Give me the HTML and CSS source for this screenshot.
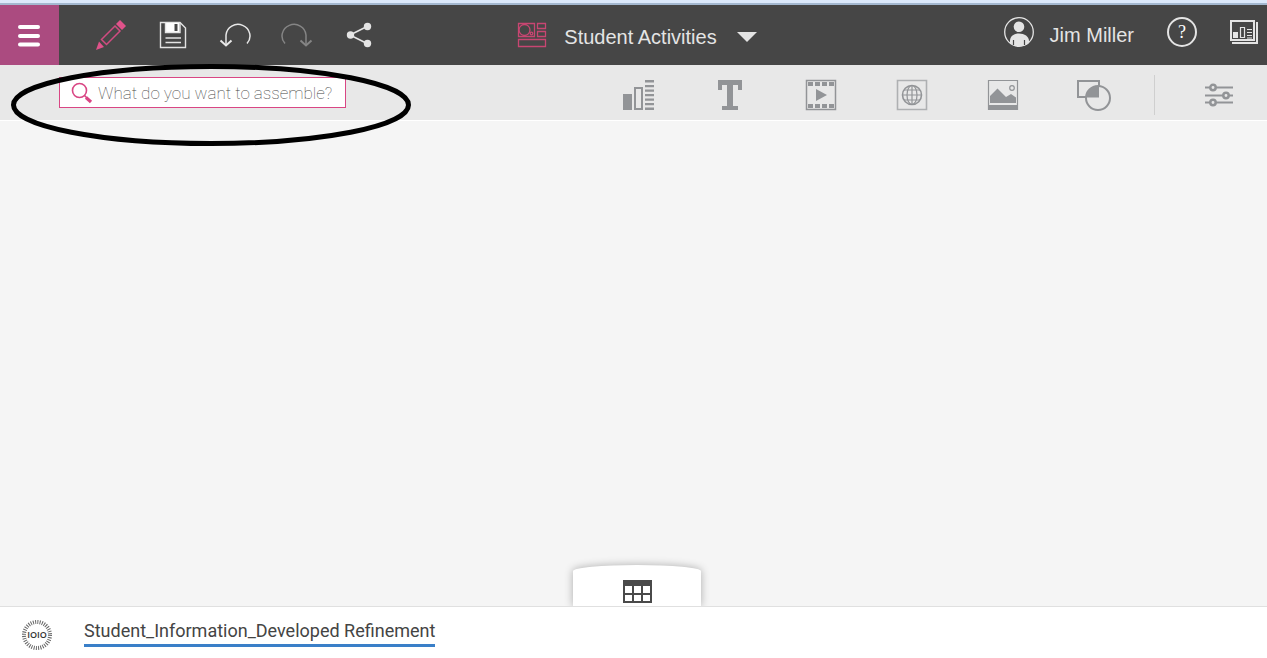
FILE: index.html
```html
<!DOCTYPE html>
<html lang="en">
<head>
<meta charset="utf-8">
<title>Student Activities</title>
<link rel="stylesheet" href="styles.css">
</head>
<body>
<div class="strip"></div>
<header class="appbar">
  <div class="actions">
    <button class="menu" aria-label="Menu">
      <svg width="24" height="24" viewBox="0 0 24 24" stroke="#fff" stroke-width="4" stroke-linecap="round"><path d="M3 4H21M3 13H21M3 21.500H21"/></svg>
    </button>
    <button class="action" aria-label="Edit">
      <svg width="32" height="32" viewBox="0 0 32 32"><path d="M25 1L31 7L27 11L21 5Z" fill="#e0528a"/><path d="M1 31L4 22.500L9 28Z" fill="#e0528a"/><path d="M20 7L25 12L11.500 25.500L6.500 20.500Z" fill="none" stroke="#d04c80" stroke-width="1.500"/></svg>
    </button>
    <button class="action" aria-label="Save">
      <svg width="28" height="28" viewBox="0 0 28 28" fill="none" stroke="#e4e4e4" stroke-width="1.400"><path d="M1.500 1.500H21L26.500 7V26.500H1.500Z"/><path d="M6.500 2V11H20.500V2Z" fill="#fff" stroke="none"/><path d="M15.500 3H18.500V10H15.500Z" fill="#464646" stroke="none"/><path d="M21 2V11.500H6.500V2M6.500 17H22M6.500 21.500H22"/></svg>
    </button>
    <button class="action" aria-label="Undo">
      <svg width="32" height="26" viewBox="0 0 32 26" fill="none" stroke="#e8e8e8" stroke-width="1.500"><path d="M7 24V13A12 11.500 0 1 1 28 21.500"/><path d="M1.500 18.500L7 23.500L12.500 18.500" stroke-width="2"/></svg>
    </button>
    <button class="action" aria-label="Redo" disabled>
      <svg width="32" height="26" viewBox="0 0 32 26" fill="none" stroke="#858585" stroke-width="1.500"><path d="M25 24V13A12 11.500 0 1 0 4 21.500"/><path d="M19.500 18.500L25 23.500L30.500 18.500" stroke-width="2"/></svg>
    </button>
    <button class="action" aria-label="Share">
      <svg width="26" height="26" viewBox="0 0 26 26" fill="#e4e4e4"><path d="M21 4.500L4 13L21 21.500" fill="none" stroke="#e4e4e4" stroke-width="1.600"/><circle cx="21.500" cy="4.500" r="3.700"/><circle cx="4.500" cy="13" r="3.700"/><circle cx="21.500" cy="21.500" r="3.700"/></svg>
    </button>
  </div>
  <button class="board">
    <svg width="30" height="26" viewBox="0 0 30 26" fill="none" stroke="#c84672" stroke-width="1.300"><path d="M1.500 1.500H17.500V14.500H1.500ZM20.500 1.500H28.500V6.500H20.500ZM20.500 9.500H28.500V14.500H20.500ZM1.500 17.500H28.500V24.500H1.500Z"/><circle cx="7.500" cy="8" r="5.500"/><circle cx="14.500" cy="11.500" r="1.300"/></svg>
    <span>Student Activities</span>
    <svg width="20" height="10" viewBox="0 0 20 10"><path d="M0 0H20L10 10Z" fill="#e4e4e4"/></svg>
  </button>
  <div class="account">
    <button class="user">
      <svg width="30" height="30" viewBox="0 0 30 30"><circle cx="15" cy="15" r="14.300" fill="none" stroke="#e4e4e4" stroke-width="1.300"/><circle cx="15" cy="9.800" r="5.300" fill="#e4e4e4"/><path d="M6 26V24C6 19.500 9.500 16.500 15 16.500S25 19.500 25 24V26C19 30.500 11 30.500 6 26Z" fill="#e4e4e4"/><path d="M9.500 23V28M20.500 23V28" stroke="#464646" stroke-width="1.200"/></svg>
      <span>Jim Miller</span>
    </button>
    <button class="help" aria-label="Help">?</button>
    <button class="gallery" aria-label="My boards">
      <svg width="28" height="24" viewBox="0 0 28 24" fill="none" stroke="#e4e4e4"><path d="M1 1H24V20H1Z" stroke-width="2"/><path d="M27 2V23H2" stroke-width="2"/><path d="M3 12H8V18H3Z" fill="#e4e4e4" stroke="none"/><path d="M10.500 7.500H14.500V17.500H10.500Z" stroke-width="1.200"/><path d="M17 9.500H22M17 12.500H22M17 15.500H22M17 18H22" stroke-width="1.200"/></svg>
    </button>
  </div>
</header>
<div class="toolbar">
  <form class="search">
    <label for="q"><svg width="22" height="22" viewBox="0 0 22 22" fill="none" stroke="#d94684"><circle cx="8.500" cy="8.500" r="7" stroke-width="1.600"/><path d="M13.500 13.500L16 16" stroke-width="1.600"/><path d="M15 15.500L20 20" stroke-width="3.200"/></svg></label>
    <input id="q" type="text" aria-label="Search" placeholder="What do you want to assemble?">
  </form>
  <div class="tools">
    <button class="tool" aria-label="Visualization">
      <svg width="32" height="32" viewBox="0 0 32 32" fill="#929497"><path d="M0 15H9V31H0ZM22 1H31V3.500H22ZM22 6H31V8.200H22ZM22 10.500H31V12.700H22ZM22 15H31V17.200H22ZM22 19.500H31V21.700H22ZM22 24H31V26.200H22ZM22 28.500H31V31H22Z"/><path d="M12 9H19V30H12Z" fill="none" stroke="#929497" stroke-width="2"/></svg>
    </button>
    <button class="tool" aria-label="Text">
      <svg width="26" height="32" viewBox="0 0 26 32"><path d="M1 1H25V11H21V6H16V27H21V31H5V27H10V6H5V11H1Z" fill="#929497"/></svg>
    </button>
    <button class="tool" aria-label="Media">
      <svg width="32" height="32" viewBox="0 0 32 32" fill="#929497"><path d="M1.500 1.500H30.500V30.500H1.500Z" fill="none" stroke="#929497" stroke-width="1.500"/><path d="M11 10L22 16L11 22Z"/><path d="M3 5H29M3 27H29" stroke="#929497" stroke-width="4" stroke-dasharray="5 2"/></svg>
    </button>
    <button class="tool" aria-label="Web page">
      <svg width="32" height="32" viewBox="0 0 32 32" fill="none" stroke="#929497" stroke-width="1.200"><path d="M1.500 1.500H30.500V30.500H1.500Z" stroke="#aeb0b2" stroke-width="1.600"/><circle cx="16" cy="16" r="9.500" stroke-width="1.600"/><ellipse cx="16" cy="16" rx="5" ry="9.500"/><path d="M16 6.500V25.500M6.500 16H25.500M8 11H24M8 21H24"/></svg>
    </button>
    <button class="tool" aria-label="Image">
      <svg width="32" height="32" viewBox="0 0 32 32" fill="#929497"><path d="M1.500 1.500H30.500V30.500H1.500Z" fill="none" stroke="#929497" stroke-width="1.200"/><path d="M3 24V17L10.500 9.500L19 18L24 15L29 18.500V24ZM1 26H31V31H1Z"/><circle cx="25" cy="9" r="2.300" fill="none" stroke="#929497" stroke-width="1.200"/></svg>
    </button>
    <button class="tool" aria-label="Shape">
      <svg width="36" height="32" viewBox="0 0 36 32" fill="none" stroke="#929497" stroke-width="2"><path d="M10 18H2V2H23V8"/><circle cx="22" cy="19" r="12"/><path d="M10 18.500A12 12 0 0 1 23 7V18.500Z" fill="#929497" stroke="none"/></svg>
    </button>
    <span class="divider"></span>
    <button class="tool settings" aria-label="Properties">
      <svg width="30" height="26" viewBox="0 0 30 26" fill="#e8e8e8" stroke="#929497" stroke-width="1.800"><path d="M1 5.500H29M1 13.500H29M1 20.500H29"/><circle cx="9" cy="5.500" r="2.700" stroke-width="2.500"/><circle cx="22" cy="13.500" r="2.700" stroke-width="2.500"/><circle cx="9" cy="20.500" r="2.700" stroke-width="2.500"/></svg>
    </button>
  </div>
</div>
<main class="canvas">
  <button class="tray" aria-label="Data tray">
    <svg width="29" height="23" viewBox="0 0 29 23"><path d="M0 0H29V23H0Z" fill="#4a4a4a"/><path d="M2 6H9V13H2ZM11 6H18V13H11ZM20 6H27V13H20ZM2 15H9V21H2ZM11 15H18V21H11ZM20 15H27V21H20Z" fill="#fff"/></svg>
  </button>
</main>
<footer class="sources">
  <svg width="32" height="32" viewBox="0 0 32 32"><circle cx="16" cy="16" r="13" fill="none" stroke="#666" stroke-width="4" stroke-dasharray="1 1.269"/><text class="bits" x="16" y="19" text-anchor="middle">IOIO</text></svg>
  <a class="source" href="#">Student_Information_Developed Refinement</a>
</footer>
<svg class="highlight" width="402" height="84" viewBox="0 0 402 84"><ellipse cx="201" cy="41" rx="197.500" ry="38.500" fill="none" stroke="#000" stroke-width="5"/></svg>
</body>
</html>
```
FILE: styles.css
```css
* { box-sizing: border-box; }
body {
  margin: 0;
  min-height: 100vh;
  display: flex;
  flex-direction: column;
  position: relative;
  background: #f5f5f5;
  font-family: "Liberation Sans", Arial, sans-serif;
}
button {
  border: 0;
  padding: 0;
  background: none;
  color: inherit;
  font: inherit;
  display: flex;
  align-items: center;
  justify-content: center;
}
svg { display: block; flex: none; }
.strip { height: 5px; background: #dce9fb; border-bottom: 2px solid #a4b8d0; }
.appbar {
  display: grid;
  grid-template-columns: 1fr auto 1fr;
  height: 60px;
  background: #464646;
  color: #e4e4e4;
  font-size: 20px;
}
.actions { display: flex; }
.menu { width: 59px; margin-right: 21px; background: #ab4b80; padding-right: 2px; }
.action { width: 62px; }
.board { gap: 17px; padding-left: 7px; }
.board span { padding-top: 4px; }
.board svg:last-child { margin: 3px 0 0 3px; }
.account {
  display: flex;
  align-items: center;
  justify-content: flex-end;
  padding: 0 9px 6px 0;
}
.user { gap: 16px; }
.user span { padding-top: 6px; }
.help {
  width: 30px;
  height: 30px;
  margin: 0 33px;
  border: 2px solid #e4e4e4;
  border-radius: 50%;
  font: 18px "Liberation Serif", serif;
  color: #fff;
}
.toolbar {
  display: flex;
  justify-content: space-between;
  align-items: center;
  height: 56px;
  background: #e8e8e8;
  border-bottom: 1px solid #fff;
}
.search {
  display: flex;
  align-items: center;
  width: 287px;
  height: 31px;
  margin-left: 59px;
  padding-left: 11px;
  background: #fff;
  border: 1px solid #d94684;
}
.search input {
  flex: 1;
  min-width: 0;
  border: 0;
  outline: 0;
  padding: 0 0 0 5px;
  background: none;
  font: 100 17px Roboto, sans-serif;
}
.search input::placeholder { color: #444; opacity: 1; }
.tools { display: flex; align-items: center; padding-top: 5px; }
.tool { width: 91px; height: 40px; }
.divider { width: 1px; height: 40px; margin-left: 15px; background: #cfcfcf; }
.tools .settings { width: 112px; padding-left: 15px; }
.canvas {
  flex: 1;
  display: flex;
  justify-content: center;
  align-items: flex-end;
  overflow: hidden;
  padding-left: 7px;
}
.tray {
  width: 128px;
  height: 41px;
  padding-top: 12px;
  background: #fff;
  border-radius: 64px 64px 0 0 / 6px 6px 0 0;
  box-shadow: 0 0 8px rgba(0, 0, 0, 0.3);
}
.sources {
  display: flex;
  align-items: center;
  gap: 31px;
  height: 52px;
  padding: 4px 21px 0;
  background: #fff;
  border-top: 1px solid #e0e0e0;
}
.bits { font: 600 9px "Open Sans", sans-serif; fill: #333; }
.source {
  margin-bottom: 5px;
  border-bottom: 3px solid #3a7fc8;
  color: #444;
  font: 18px/26px Roboto, sans-serif;
  text-decoration: none;
}
.highlight { position: absolute; left: 10px; top: 64px; pointer-events: none; }
```
